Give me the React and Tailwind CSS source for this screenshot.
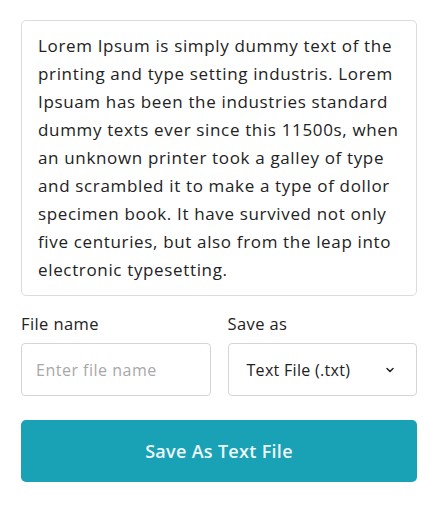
import React from 'react';

const lines = [
  'Lorem Ipsum is simply dummy text of the',
  'printing and type setting industris. Lorem',
  'Ipsuam has been the industries standard',
  'dummy texts ever since this 11500s, when',
  'an unknown printer took a galley of type',
  'and scrambled it to make a type of dollor',
  'specimen book. It have survived not only',
  'five centuries, but also from the leap into',
  'electronic typesetting.',
];

function App() {
  return (
    <div className="min-h-screen bg-white px-[21px] pt-[20px] font-['Open_Sans',sans-serif]">
      <div className="w-[396px] rounded-[5px] border border-[#dcdcdc] px-[16px] pt-[11px] pb-[11px] text-[17px] leading-[28px] tracking-[0.65px] text-[#222]">
        {lines.map((line) => (
          <div key={line} className="whitespace-nowrap">{line}</div>
        ))}
      </div>

      <div className="mt-[17px] grid w-[396px] grid-cols-2 gap-[17px]">
        <div>
          <label className="block text-[16.5px] leading-[22px] tracking-[0.4px] text-[#222]">File name</label>
          <input
            type="text"
            placeholder="Enter file name"
            className="mt-[8px] h-[53px] w-full rounded-[4px] border border-[#d5d5d5] px-[14px] text-[16px] tracking-[0.5px] text-[#222] outline-none placeholder:text-[#a8a8a8]"
          />
        </div>
        <div>
          <label className="block text-[16.5px] leading-[22px] tracking-[0.4px] text-[#222]">Save as</label>
          <div className="mt-[8px] flex h-[53px] w-full items-center justify-between rounded-[4px] border border-[#d5d5d5] pl-[18px] pr-[20px] text-[16px] tracking-[0.3px] text-[#222]">
            <span>Text File (.txt)</span>
            <svg width="12" height="12" viewBox="0 0 24 24" fill="none" stroke="#222" strokeWidth="3" strokeLinecap="round" strokeLinejoin="round">
              <path d="M6 9l6 6 6-6" />
            </svg>
          </div>
        </div>
      </div>

      <button className="mt-[24px] flex h-[62px] w-[396px] items-center justify-center rounded-[5px] bg-[#19a1b6] text-[18px] font-semibold tracking-[0.3px] text-[#eef8fa]">
        Save As Text File
      </button>
    </div>
  );
}

export default App;
